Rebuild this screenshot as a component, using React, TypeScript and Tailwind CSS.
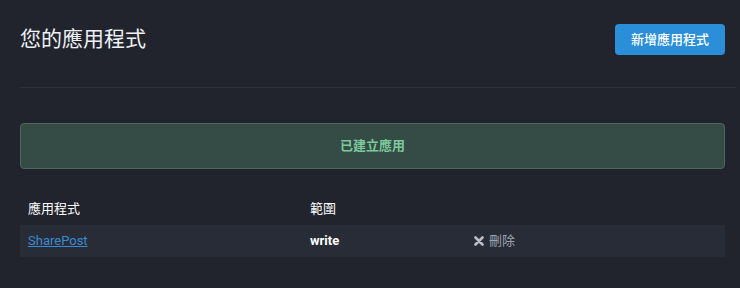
export default function App() {
  return (
    <div
      className="min-h-[288px] w-full bg-[#21242d] text-[#e6e8ec]"
      style={{ fontFamily: 'Roboto, "Noto Sans CJK TC", sans-serif' }}
    >
      <div className="pl-5 pr-[15px] pt-6">
        {/* Header */}
        <div className="flex items-center justify-between h-[31px]">
          <h1 className="text-[21px] leading-none font-normal text-[#eef0f3]">您的應用程式</h1>
          <button className="h-[31px] px-[16px] rounded-[4px] bg-[#2a8fd8] text-white text-[13px] font-medium">
            新增應用程式
          </button>
        </div>
        <div className="mt-8 -mr-[11px] border-t border-[#2d313b]" />

        {/* Alert */}
        <div className="mt-[35px] h-[46px] flex items-center justify-center rounded-[4px] border border-[#4a685d] bg-[#344b46] text-[13px] font-bold text-[#7dc99c]">
          已建立應用
        </div>

        {/* Table */}
        <table className="mt-6 w-full text-[13px] border-collapse">
          <thead>
            <tr className="h-8">
              <th className="w-[282px] px-2 text-left font-normal text-white">應用程式</th>
              <th className="w-[164px] px-2 text-left font-normal text-white">範圍</th>
              <th className="px-2" />
            </tr>
          </thead>
          <tbody>
            <tr className="h-8 bg-[#282c37]">
              <td className="px-2">
                <a href="#" className="text-[#3a8ad2] underline">SharePost</a>
              </td>
              <td className="px-2 font-bold text-white">write</td>
              <td className="px-2 text-[#9aa3b1]">
                <span className="inline-flex items-center gap-[5px]">
                  <svg width="10" height="10" viewBox="0 0 10 10" className="text-[#b8bfca]">
                    <path d="M1.5 1.5 L8.5 8.5 M8.5 1.5 L1.5 8.5" stroke="currentColor" strokeWidth="2.6" strokeLinecap="round" />
                  </svg>
                  刪除
                </span>
              </td>
            </tr>
          </tbody>
        </table>
      </div>
    </div>
  );
}
